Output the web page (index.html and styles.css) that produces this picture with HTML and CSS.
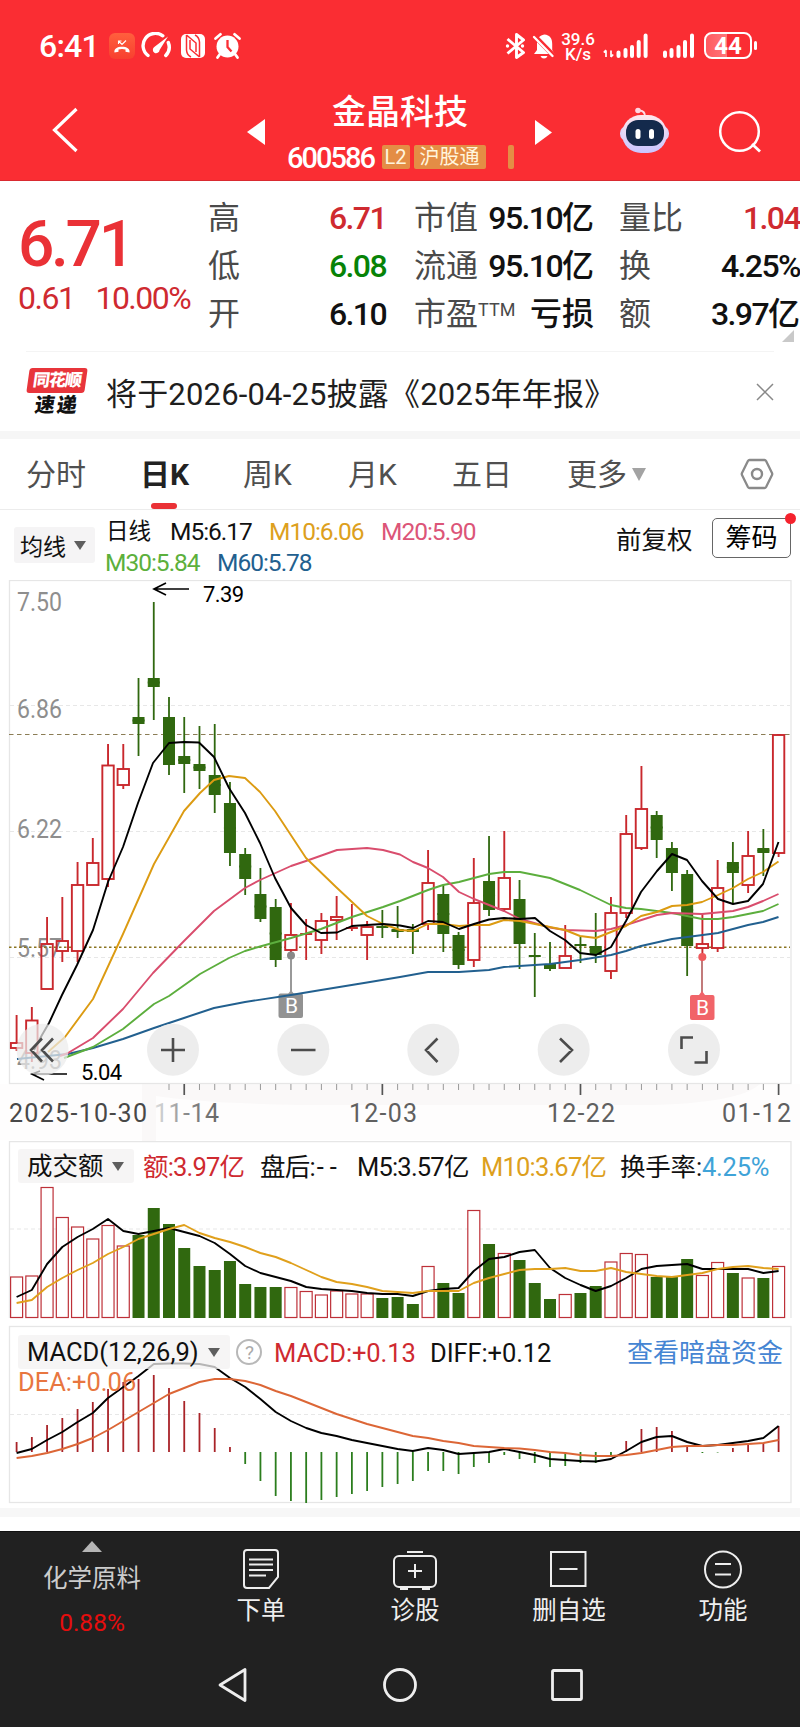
FILE: index.html
```html
<!DOCTYPE html>
<html lang="zh-CN">
<head>
<meta charset="utf-8">
<title>金晶科技 600586</title>
<link rel="stylesheet" href="styles.css">
</head>
<body>
<header class="top">
  <div class="status">
    <span class="clock">6:41</span>
    <svg class="status-left" width="134" height="30" viewBox="108 32 134 30">
      <defs><linearGradient id="call" x1="0" y1="0" x2="0" y2="1"><stop offset="0" stop-color="#ff5f3d"/><stop offset="1" stop-color="#f8402f"/></linearGradient></defs>
      <rect x="109" y="33" width="26" height="26" rx="6" fill="url(#call)"/>
      <path d="M118.500 41l3.500 3.500 4-4M118.500 44v-3h3" fill="none" stroke="#fff" stroke-width="1.100"/>
      <path d="M114.500 52.500c-.8-4 3-5.800 7.500-5.800s8.300 1.800 7.500 5.800l-4-.7v-2.200q-3.500-1.100-7 0v2.200z" fill="#fff"/>
      <path d="M148 55.500a12.300 12.300 0 0 1 14.800-19.700M168.300 42.500a12.300 12.300 0 0 1-2.500 13" fill="none" stroke="#fff" stroke-width="3.400" stroke-linecap="round"/>
      <path d="M168 36.500l-8.400 13.500a3.400 3.400 0 1 1-5-3.200z" fill="#fff"/>
      <rect x="181" y="34" width="24" height="24" rx="5" fill="#fff"/>
      <path d="M186.500 35v15q.4 5 4.500 7M199.500 57v-15q-.4-5-4.500-7M190 40v9l9.500 8M196 52v-9l-9.500-8" fill="none" stroke="#fa2d33" stroke-width="1.500"/>
      <circle cx="227.500" cy="46.500" r="11" fill="#fff"/>
      <path d="M215.500 38.500l5-4.200M239.500 38.500l-5-4.200M220 54l-2.500 3.500M235 54l2.500 3.500" stroke="#fff" stroke-width="2.800" stroke-linecap="round"/>
      <path d="M227.500 40v7l4 4.500" fill="none" stroke="#fa2d33" stroke-width="2.300"/>
    </svg>
    <svg class="status-bt" width="50" height="28" viewBox="505 32 50 28">
      <path d="M507.500 39l16 13.500-7 5V34.500l7 5.500-16 13.500" fill="none" stroke="#fff" stroke-width="2.900" stroke-linejoin="round"/>
      <circle cx="507.500" cy="46" r="1.700" fill="#fff"/><circle cx="522.500" cy="46" r="1.700" fill="#fff"/>
      <path d="M534 54l3-4v-7c0-5 3-7.500 7.200-8.500 6 .5 8 4 8 9.500v6l2.300 4z" fill="#fff"/><path d="M540.500 56h7q-1 2.500-3.500 2.500t-3.500-2.500z" fill="#fff"/>
      <path d="M533 34.500l21 21.500" stroke="#fa2d33" stroke-width="5"/><path d="M534 37l18.500 19" stroke="#fff" stroke-width="2.400" stroke-linecap="round"/>
    </svg>
    <span class="speed"><span>39.6</span><span>K/s</span></span>
    <svg class="status-signal" width="94" height="28" viewBox="602 32 94 28">
      <path d="M606 57v-6.500M603.800 52.500l2.200-2.500M611 50.500v6.500M613.200 54.500l-2.200 2.500" fill="none" stroke="#fff" stroke-width="1.700"/>
      <path d="M618.500 52.500v3.500M625.500 50v6M632 47v9M638.700 42v14M645.600 35.500v20.500M665 52.500v3.500M671.500 50v6M678.500 47v9M685 42v14M692 35.500v20.500" stroke="#fff" stroke-width="4" stroke-linecap="round"/>
    </svg>
    <span class="battery">44</span><i class="battery-tip"></i>
  </div>
  <div class="titlebar">
    <svg class="back" width="30" height="48" viewBox="50 106 30 48"><path d="M76.500 109L54.500 130l22 21" fill="none" stroke="#fff" stroke-width="3.200"/></svg>
    <svg class="prev" width="18" height="26" viewBox="0 0 18 26"><path d="M0 13L18 0v26z" fill="#fff"/></svg>
    <div class="stock">
      <h1>金晶科技</h1>
      <div class="code"><b>600586</b><span class="tag tag-l2">L2</span><span class="tag tag-hk">沪股通</span><span class="tag-bit"></span></div>
    </div>
    <svg class="next" width="17" height="25" viewBox="0 0 17 25"><path d="M17 12.500L0 0v25z" fill="#fff"/></svg>
    <svg class="robot" width="50" height="48" viewBox="620 106 50 48">
      <defs><linearGradient id="shell" x1="0" y1="0" x2="0" y2="1"><stop offset="0" stop-color="#ffe8ee"/><stop offset="1" stop-color="#c9c4ff"/></linearGradient></defs>
      <path d="M640 110.500q6 0 6 6" fill="none" stroke="#ffdbe6" stroke-width="2"/><circle cx="639" cy="110.500" r="2.800" fill="#ffd6e2"/>
      <rect x="621" y="126" width="49" height="15" rx="7" fill="#dcd2f8"/>
      <rect x="623" y="115" width="45" height="38" rx="19" fill="url(#shell)"/>
      <rect x="627" y="120" width="38" height="26" rx="12" fill="#142a4c"/>
      <rect x="636.500" y="129" width="5" height="10" rx="2.500" fill="#fff"/><rect x="650" y="129" width="5" height="10" rx="2.500" fill="#fff"/>
    </svg>
    <svg class="search" width="44" height="44" viewBox="718 110 44 44"><circle cx="739.500" cy="131.500" r="19.300" fill="none" stroke="#fff" stroke-width="2.500"/><path d="M752 144l8 7.500" stroke="#fff" stroke-width="2.800"/></svg>
  </div>
</header>

<section class="quote">
  <div class="last">
    <div class="price">6.71</div>
    <div class="change"><span>0.61</span><span>10.00%</span></div>
  </div>
  <dl class="facts facts-a"><dt>高</dt><dd class="red">6.71</dd><dt>低</dt><dd class="green">6.08</dd><dt>开</dt><dd>6.10</dd></dl>
  <dl class="facts facts-b"><dt>市值</dt><dd>95.10<em>亿</em></dd><dt>流通</dt><dd>95.10<em>亿</em></dd><dt>市盈<sup>TTM</sup></dt><dd><em>亏损</em></dd></dl>
  <dl class="facts facts-c"><dt>量比</dt><dd class="red">1.04</dd><dt>换</dt><dd>4.25%</dd><dt>额</dt><dd>3.97<em>亿</em></dd></dl>
  <i class="corner"></i>
</section>

<section class="news">
  <div class="brand"><span class="brand-top">同花顺</span><span class="brand-bottom">速递</span></div>
  <p>将于2026-04-25披露《2025年年报》</p>
  <svg width="18" height="18" viewBox="0 0 18 18"><path d="M1 1l16 16M17 1L1 17" stroke="#888" stroke-width="1.500"/></svg>
</section>

<nav class="tabs">
  <span class="t1">分时</span><span class="t2 active">日K</span><span class="t3">周K</span><span class="t4">月K</span><span class="t5">五日</span><span class="t6">更多<i></i></span>
  <svg width="34" height="32" viewBox="0 0 34 32"><path d="M9.500 2h15q1 0 1.600 1L32 15q.5 1 0 2l-5.900 12q-.6 1-1.600 1h-15q-1 0-1.600-1L2 17q-.5-1 0-2L7.900 3q.6-1 1.600-1z" fill="none" stroke="#8a8a8a" stroke-width="2.300"/><circle cx="17" cy="16" r="5" fill="none" stroke="#8a8a8a" stroke-width="2.400"/></svg>
</nav>

<section class="legend">
  <span class="chip chip-ma">均线<i></i></span>
  <div class="ma">
    <div class="ma-row"><span class="ma-name">日线</span><span class="ma-5">M5:6.17</span><span class="ma-10">M10:6.06</span><span class="ma-20">M20:5.90</span></div>
    <div class="ma-row"><span class="ma-30">M30:5.84</span><span class="ma-60">M60:5.78</span></div>
  </div>
  <span class="adjust">前复权</span>
  <span class="chips-btn">筹码<i></i></span>
</section>

<svg id="kline" class="chart" width="800" height="561" viewBox="0 580 800 561"></svg>

<section class="panel">
  <svg id="volume" class="chart" width="800" height="180" viewBox="0 1141 800 180"></svg>
  <div class="panel-bar vol-bar"><span class="chip chip-vol">成交额<i></i></span><span class="v1 red">额:3.97亿</span><span class="v2">盘后:<s>--</s></span><span class="v3">M5:3.57亿</span><span class="v4">M10:3.67亿</span><span class="v5">换手率:<b>4.25%</b></span></div>
</section>
<section class="panel">
  <svg id="macd" class="chart" width="800" height="187" viewBox="0 1321 800 187"></svg>
  <div class="panel-bar macd-bar"><span class="chip chip-macd">MACD(12,26,9)<i></i></span><span class="help">?</span><span class="m1 red">MACD:+0.13</span><span class="m2">DIFF:+0.12</span><span class="m3">查看暗盘资金</span></div>
  <div class="dea">DEA:+0.06</div>
</section>
<div class="band"></div>

<footer class="dock">
  <div class="menu">
    <div class="sector"><i></i><span>化学原料</span><b>0.88%</b></div>
    <div class="item"><svg width="44" height="44" viewBox="0 0 44 44"><path d="M8 3h28q3 0 3 3v24l-9 11H8q-3 0-3-3V6q0-3 3-3zM10 12.500h24M10 17.500h24M10 23h24M10 28.500h17"/></svg><span>下单</span></div>
    <div class="item"><svg width="46" height="44" viewBox="0 0 46 44"><rect x="2" y="9" width="42" height="31" rx="5"/><path d="M15 5h16M23 17v14M16 24h14"/><path d="M8 41.500h8M30 41.500h8" stroke-width="3"/></svg><span>诊股</span></div>
    <div class="item"><svg width="44" height="44" viewBox="0 0 44 44"><rect x="4" y="5" width="34.500" height="34"/><path d="M12.500 22h18"/></svg><span>删自选</span></div>
    <div class="item"><svg width="44" height="44" viewBox="0 0 44 44"><circle cx="22" cy="22.500" r="18"/><path d="M14 17h16M14 27.500h16"/></svg><span>功能</span></div>
  </div>
  <div class="system">
    <svg width="34" height="38" viewBox="0 0 34 38"><path d="M4 19L29 3.500v31z" stroke-linejoin="round"/></svg>
    <svg width="38" height="38" viewBox="0 0 38 38"><circle cx="19" cy="19" r="15.500"/></svg>
    <svg width="34" height="34" viewBox="0 0 34 34"><rect x="2.500" y="2.500" width="29" height="29" rx="1"/></svg>
  </div>
</footer>
<script src="app.js"></script>
</body>
</html>
```
FILE: styles.css
```css
* { box-sizing: border-box; }
body { margin: 0; width: 800px; height: 1727px; overflow: hidden; background: #fff; color: #111; font-family: Roboto, "Noto Sans CJK SC", sans-serif; }
svg { display: block; flex: none; }
i, em { font-style: normal; }
span { white-space: nowrap; }
.red { color: #cf2a30; }
.green { color: #078307; }

.top { height: 181px; background: #fa2d33; color: #fff; border-bottom: 1px solid #d92a30; }
.status { display: flex; align-items: flex-start; height: 90px; padding: 32px 0 0 39px; }
.clock { width: 69px; font-size: 32px; line-height: 29px; font-weight: 500; letter-spacing: -0.8px; }
.status-bt { margin-left: 263px; }
.speed { display: flex; flex-direction: column; width: 38px; margin-left: 4px; font-size: 17px; line-height: 15px; font-weight: 500; text-align: center; }
.status-signal { margin-left: 5px; }
.battery { width: 48px; height: 27px; margin-left: 8px; border: 2px solid #fff; border-radius: 8px; background: linear-gradient(90deg, #ff5a60, #ff767a 48%, #fa2d33 48%); font-size: 24px; line-height: 24px; font-weight: 700; text-align: center; }
.battery-tip { width: 3px; height: 9px; margin: 9px 0 0 2px; border-radius: 2px; background: #fff; }
.titlebar { display: flex; align-items: flex-start; height: 90px; padding-left: 50px; }
.back { margin-top: 16px; }
.prev { margin: 29px 0 0 167px; }
.stock { width: 229px; margin-left: 22px; }
h1 { margin: 4px 0 0 45px; font-size: 34px; line-height: 36px; font-weight: 500; }
.code { display: flex; align-items: center; height: 30px; margin-top: 12px; }
.code b { width: 94.500px; padding-top: 1px; font-size: 29px; line-height: 30px; font-weight: 500; letter-spacing: -2px; }
.tag { height: 24px; background: #e48d45; border-radius: 2px; color: #fff5dd; font-size: 20px; line-height: 24px; text-align: center; }
.tag-l2 { width: 28px; }
.tag-hk { width: 72px; margin-left: 4px; }
.tag-bit { width: 6px; height: 24px; margin-left: 22px; background: #e48d45; border-radius: 2px; }
.next { margin: 30px 0 0 19px; }
.robot { margin: 16px 0 0 67px; }
.search { margin: 20px 0 0 49px; }

.quote { position: relative; display: flex; height: 170px; }
.last { width: 208px; padding: 32px 0 0 18px; }
.price { font-size: 64px; line-height: 64px; font-weight: 500; letter-spacing: -3.3px; color: #ea3136; }
.change { display: flex; gap: 21px; margin-top: 3px; font-size: 32px; line-height: 36px; letter-spacing: -1.5px; color: #cf2a30; }
.facts { display: grid; grid-template-columns: 70px 1fr; grid-auto-rows: 48px; height: 144px; margin: 13px 0 0; font-size: 32px; line-height: 48px; }
.facts dt { color: #4a4a4a; white-space: nowrap; }
.facts dd { margin: 0; text-align: right; font-weight: 500; letter-spacing: -1.6px; white-space: nowrap; }
.facts em { letter-spacing: 0; }
.facts-a { width: 178px; }
.facts-b { width: 180px; margin-left: 28px; }
.facts-c { width: 181px; margin-left: 25px; }
sup { font-size: 18px; line-height: 1; vertical-align: 9px; }
.corner { position: absolute; right: 6px; bottom: 9px; border-left: 12px solid transparent; border-bottom: 12px solid #c9c9c9; }

.news { display: flex; align-items: center; height: 88px; padding-top: 2px; border-bottom: 8px solid #f6f6f6; background: linear-gradient(#f4f4f4, #f4f4f4) 26px 0 / 748px 1px no-repeat; }
.brand { display: flex; flex-direction: column; align-items: center; width: 60px; margin: 0 0 0 27px; font-weight: 900; }
.brand-top { width: 58px; height: 25px; border-radius: 3px; background: #e8353b; color: #fff; font-size: 17px; line-height: 24px; text-align: center; transform: skewX(-8deg); letter-spacing: -1px; }
.brand-bottom { font-size: 20px; line-height: 24px; letter-spacing: 2px; transform: skewX(-8deg); }
.news p { width: 642px; margin: 5px 0 0 19px; font-size: 31px; line-height: 42px; letter-spacing: 0.18px; color: #1e1e1e; white-space: nowrap; }
.news svg { margin-left: 8px; }

.tabs { display: flex; align-items: center; height: 71px; border-bottom: 1px solid #ececec; font-size: 30px; color: #505050; }
.tabs span { line-height: 71px; height: 70px; }
.t1 { width: 114px; margin-left: 26px; }
.t2 { width: 103px; }
.active { display: flex; flex-direction: column; font-weight: 700; color: #222; }
.active::after { content: ""; width: 26px; height: 6px; margin: -7px 0 0 11px; border-radius: 3px; background: #ea3136; }
.t3 { width: 105px; }
.t4 { width: 104px; }
.t5 { width: 115px; }
.t6 { display: flex; align-items: center; gap: 5px; width: 173px; }
.t6 i { border: 7.500px solid transparent; border-top: 13px solid #a3a3a3; border-bottom: 0; }

.legend { display: flex; height: 70px; padding-left: 14px; }
.chip { display: flex; align-items: center; background: #f5f4f5; border-radius: 3px; color: #111; }
.chip i { border: 6px solid transparent; border-top: 9px solid #5e5e5e; border-bottom: 0; }
.chip-ma { gap: 8px; width: 81px; height: 36px; margin-top: 17px; padding-left: 6px; font-size: 23px; }
.ma { width: 510px; margin-left: 11px; padding-top: 5px; font-size: 24.500px; letter-spacing: -1px; }
.ma-row { display: flex; height: 31px; line-height: 33px; }
.ma-name { width: 64px; font-size: 22.500px; letter-spacing: 0; }
.ma-5 { width: 99px; }
.ma-10 { width: 112px; color: #dda01d; }
.ma-20 { color: #dc5578; }
.ma-30 { width: 112px; margin-left: -1px; color: #5cb03c; }
.ma-60 { color: #22608f; }
.adjust { width: 96px; font-size: 25.500px; line-height: 60px; }
.chips-btn { position: relative; width: 79px; height: 40px; margin-top: 8px; border: 1px solid #666; border-radius: 5px; font-size: 26px; line-height: 39px; text-align: center; color: #000; }
.chips-btn i { position: absolute; right: -6px; top: -6px; width: 11px; height: 11px; border-radius: 50%; background: #f5222d; }

.panel { position: relative; }
.panel-bar { position: absolute; left: 18px; right: 9px; top: 8px; display: flex; height: 34px; font-size: 25.500px; line-height: 37px; letter-spacing: -0.8px; }
.macd-bar { top: 14px; }
.panel-bar .chip { letter-spacing: 0; background: rgba(243, 241, 242, .75); }
.chip-vol { gap: 8px; width: 116px; padding-left: 9px; font-size: 25.500px; }
.v1 { width: 117px; margin-left: 9px; }
.v2 { width: 97px; }
.v2 s { text-decoration: none; letter-spacing: 6px; margin-left: 2px; }
.v3 { width: 124px; }
.v4 { width: 139px; color: #dda01d; }
.v5 { letter-spacing: -0.2px; }
.v5 b { font-weight: 400; color: #3fa3d8; }
.chip-macd { gap: 9px; width: 212px; padding-left: 9px; font-size: 25.500px; }
.help { width: 26px; height: 26px; margin: 4px 0 0 6px; border: 2px solid #b8b8b8; border-radius: 50%; color: #aaa; font-size: 19px; line-height: 23px; text-align: center; }
.m1 { width: 156px; margin-left: 12px; letter-spacing: -0.1px; }
.m2 { width: 197px; letter-spacing: -0.1px; }
.m3 { color: #4585d3; font-size: 26px; letter-spacing: 0; }
.dea { position: absolute; left: 18px; top: 44px; font-size: 25.500px; line-height: 34px; color: #e87640; }
.band { height: 9px; background: #f7f7f7; }

.dock { height: 196px; margin-top: 14px; background: #212121; border-top: 1px solid #111; color: #eee; }
.menu { display: grid; grid-template-columns: 184px repeat(4, 154px); height: 116px; }
.sector, .item { display: flex; flex-direction: column; align-items: center; font-size: 24.500px; }
.sector { padding-top: 9px; }
.sector i { border: 10px solid transparent; border-bottom: 11px solid #b5b5b5; border-top: 0; }
.sector span { margin-top: 10px; line-height: 34px; color: #ccc; }
.sector b { margin-top: 10px; font-weight: 400; line-height: 34px; color: #e60d0d; }
.item { padding-top: 15px; }
.item span { margin-top: 3px; line-height: 34px; }
.item svg { fill: none; stroke: #eee; stroke-width: 2; }
.system { display: flex; align-items: center; height: 74px; padding-left: 216px; }
.system svg { fill: none; stroke: #eee; stroke-width: 2.800; }
.system svg:nth-child(2) { margin-left: 130.500px; }
.system svg:nth-child(3) { margin-left: 131px; }

.chart text { font-family: Roboto, "Noto Sans CJK SC", sans-serif; }
.frame { fill: none; stroke: #e6e6e6; stroke-width: 1.300; }
.grid { stroke: #e7e7e7; stroke-width: 1.200; stroke-dasharray: 4 3; }
.up { fill: #fff; stroke: #c9282d; stroke-width: 1.900; }
.up-thin { fill: #fff; stroke: #bd3038; stroke-width: 1.200; }
.down { fill: #30680f; }
.line { fill: none; stroke-width: 1.900; stroke-linejoin: round; }
.axis { font-size: 25px; fill: #8e8e8e; }
.date { font-size: 25px; fill: #606060; }
.mark { font-size: 22px; fill: #000; }
.btn { fill: #ececec; }
.glyph { fill: none; stroke: #4c4c4c; stroke-width: 2.600; }
```
FILE: app.js
```js
const X0 = 16.6, STEP = 15.24;
const x = i => X0 + STEP * i;
const poly = (pts, color) => `<polyline class="line" stroke="${color}" points="${pts}"/>`;
const series = (ys, color) => poly(ys.map((y, i) => `${x(i).toFixed(1)},${y}`).join(' '), color);
const text = (cls, s, left, base, width, extra = '') => `<text class="${cls}" x="${left}" y="${base}" textLength="${width}" ${extra}>${s}</text>`;
const hline = (y, cls = 'grid') => `<path class="${cls}" d="M10 ${y}H790"/>`;

// direction, high, body top, body bottom, low
const candles = [
['r',1015,1043,1048,1051],['r',1007,1020.5,1053,1062],['r',917,944,989,989],['r',897,941,951,962],['r',862,885,951,962],['r',838,863,885,885],['r',744,765.5,879,887],['r',744,769,785,789],
['g',678,717,724,756],['g',602,678,687,720],['g',697,717,765,775],['g',717,756,764,793],['g',726,764,771,789],['g',724,775,795,813],['g',782,803,853,866],['g',848,854,879,895],['g',868,894,919,922],['g',899,907,960,967],
['r',903,935,950,955],['r',919,934,934,960],['r',913,921,940,954],['r',896,917,920,940],['r',904,928,928,931],['r',921,927,935,960],['g',910,927,927,938],['g',906,929,932,938],['g',924,929,932,954],
['r',850,883,924,930],['g',885,894,934,952],['g',932,935,965,969],['r',858,903,960,967],['g',836,881,910,916],['r',831,878,909,911],['g',880,899,944,969],['g',933,956,956,997],['g',942,964,969,971],['r',925,956,968,968],
['g',937,945,945,963],['g',913,946,955,963],['r',897,913,971,979],['r',815,834,913,918],['r',766,809,848,850],['g',811,815,840,858],['g',842,848,873,891],['g',870,874,946,976],['r',913,944,948,957],['r',860,888,948,952],
['g',842,862,873,904],['r',831,856,885,893],['g',829,848,853,876],['r',735,735,853,857]];

const ma60 = '17,1059 68,1054 93,1048 123,1039 154,1028 184,1018 214,1008 245,1002 291,995 321,990 367,982.5 400,977 428,972 459,972 489,970 504,967 550,964 580,960 611,955 626,951 641,946 672,939 718,933 748,925 763,922 778.5,917';
const ma30 = '64,1058 93,1047 123,1029 154,1004 169,996 200,974 229,958 245,951 260,946.5 291,938 321,929 352,917 383,907 400,901 428,890 443,885 459,882 489,874 504,872 520,872 550,878 580,890 611,905 626,908 641,909 672,913 702,919 718,919 733,917 763,911 778.5,904';
const ma20 = '60,1056 68,1053 93,1038 123,1009 153,973 184,941 214,911 245,888 260,880 291,866 306,861 337,850 367,848 383,850 400,854.5 413,862 428,868 443,877 459,892 474,899 504,911 520,919 550,927.5 565,930 596,931 611,929 626,925 657,915 672,913 702,914 733,911 748,907 763,901 778.5,894';
const ma10 = '48,1052 65,1037 93,999 123,934 154,864 184,811 200,793 214,780 229,776 245,778 260,792 275,811 306,858 336,887 367,916 383,924 400,930 413,931 428,924 443,924 459,926 474,925 489,925 504,920 520,921 535,924 550,927 565,930 580,936 596,938 611,932 626,926 641,916 657,912 672,906 687,905 702,902 718,895 733,888 748,879 763,872 778.5,861.5';
const ma5 = '34,1050 42,1035 49,1023 62,995 77,965 93,930 108,882 123,847 138,803 153,763 169,743 184,742 199,742.5 214,757 229,788 245,813 260,843 275,878 291,908 306,925 321,933 337,932.5 352,926 367,925 383,924 400,925.5 413,928 428,921 443,922 459,929 474,924 489,919.5 504,918 520,919 535,918 550,931 565,940 580,953 596,955 611,947 626,921 641,892 657,871 672,854 687,860 702,881 718,899 733,904 748,901 763,884 778.5,842';

let k = `<path d="M0 1084H800V1140H0z" fill="#fefdfd"/><path d="M142 1084H760Q740 1103 650 1105H300Q200 1103 156 1096V1141H142z" fill="#faf8f8"/>`;
k += `<rect class="frame" x="9.5" y="580.5" width="781.500" height="503"/>` + hline(705.5) + hline(831.5) + hline(957.5);
k += [['7.50', 611], ['6.86', 718], ['6.22', 838], ['5.57', 957], ['4.93', 1069]].map(([s, y]) => text('axis', s, 17, y, 45, 'lengthAdjust="spacingAndGlyphs"')).join('');
k += `<path d="M9 734.5H790" stroke="#8b7d55" stroke-width="1.200" stroke-dasharray="4.500 3.500"/><path d="M9 947.3H790" stroke="#8a7420" stroke-width="1.500" stroke-dasharray="2.500 2.500"/>`;
candles.forEach(([d, hi, t, b, lo], i) => {
  const c = x(i), col = d === 'r' ? '#c9282d' : '#30680f';
  if (d === 'g' || b - t < 1) k += `<path d="M${c} ${hi}V${lo}M${c - 6} ${(t + b) / 2}h12" stroke="${col}" stroke-width="1.800"/>`;
  else k += `<path d="M${c} ${hi}V${t}M${c} ${b}V${lo}" stroke="${col}" stroke-width="1.900"/>`;
  if (b - t >= 1) k += d === 'r' ? `<rect class="up" style="fill-opacity:${i < 4 ? 0 : 1}" x="${c - 5.7}" y="${t}" width="11.400" height="${b - t}"/>` : `<rect class="down" x="${c - 6}" y="${t}" width="12" height="${b - t}"/>`;
});
k += `<path d="M291 956V993" stroke="#555" stroke-width="1.200"/><circle cx="291" cy="955.5" r="4" fill="#888"/><path d="M288 994l3-4 3 4z" fill="#999"/><rect x="278.500" y="993.500" width="24.500" height="24.500" rx="2" fill="#929292"/>` +
  `<path d="M702 957V995" stroke="#922" stroke-width="1.200"/><circle cx="702.300" cy="957" r="4" fill="#f0595d"/><path d="M699 995l3-4 3 4z" fill="#f0626a"/><rect x="690" y="995" width="24.500" height="25" rx="2" fill="#f16469"/>`;
k += poly(ma60, '#22608f') + poly(ma30, '#5cae3d') + poly(ma20, '#d94d6d') + poly(ma10, '#dc9b12') + poly(ma5, '#000');
k += `<text x="291.500" y="1013" font-size="21" text-anchor="middle" fill="#fff">B</text><text x="702.500" y="1015" font-size="21" text-anchor="middle" fill="#fff">B</text>`;
k += `<path d="M189 589H154M166 583l-12 6 12 6M67 1074H32M44 1080l-12-6 8-3" fill="none" stroke="#000" stroke-width="1.700"/>` + text('mark','7.39',203,602,41) + text('mark','5.04',81,1080,41);
[42.5, 173, 303.3, 433.3, 563.7, 694].forEach((c, i) => { k += `<circle class="btn" style="fill-opacity:${i ? .92 : .72}" cx="${c}" cy="1049.700" r="26"/>`; });
k += `<path class="glyph" d="M42 1038.500L31 1050l11 11.500M53 1038.500L42 1050l11 11.500M161 1050h24M173 1038v24M291 1050h24.500M437.500 1038.500L426 1050l11.500 12M560 1038.500l12 11.500-12 12M681.500 1049v-11.500H693M694.500 1062.500h12V1051"/>`;
for (let i = 10; i <= 50; i++) { const major = (i - 11) % 13 === 0; k += `<path d="M${x(i)} 1084v${major ? 11 : 6}" stroke="${major ? '#555' : '#999'}" stroke-width="${major ? 1.7 : 1}"/>`; }
k += `<defs><linearGradient id="fade"><stop offset="0" stop-color="#e0e0e0"/><stop offset=".5" stop-color="#8a8a8a"/><stop offset="1" stop-color="#666"/></linearGradient></defs>`;
k += text('date','2025-10-30',9,1122,138,'style="fill:#484848"') + text('date','11-14',154,1122,65,'style="fill:url(#fade)"') + text('date','12-03',349,1122,68) + text('date','12-22',547,1122,68) + text('date','01-12',722,1122,69);
document.getElementById('kline').innerHTML = k;

const turnover = [1277,1276,1187.5,1217.5,1227,1239,1225.5,1246,1235,1208,1224,1248,1266,1270,1261,1284,1287,1287,1287.5,1291.5,1295,1291,1294,1294,1298,1297,1304,1266.5,1283,1293,1210.5,1244,1253.5,1260,1283,1299,1294.5,1293,1286,1262,1253.5,1254.5,1277,1277,1259,1275.5,1262.5,1273,1278,1278,1266.5];
const v5 = [1297,1290,1264,1247,1237,1229,1219,1231,1234,1231,1228,1232,1236,1243,1254,1266,1273,1277,1281,1287,1289,1290,1291,1293,1294,1294,1296,1291,1289,1288,1271,1259,1257,1252,1250,1268,1278,1285,1291,1286,1278,1269,1266,1265,1264,1269,1269,1269,1269,1273,1271];
const v10 = [1303,1300,1287,1278,1270,1263,1254,1247,1239,1234,1229,1225,1233,1238,1242,1247,1253,1257,1263,1270,1277,1282,1284,1287,1291,1292,1293,1291,1291,1291,1283,1278,1274,1270,1269,1269,1268,1271,1271,1268,1272,1274,1276,1277,1275,1273,1269,1267,1266,1268,1269];
let v = `<path class="frame" d="M9.500 1318V1141.500H791V1318"/>` + hline(1229);
turnover.forEach((t, i) => { v += candles[i][0] === 'r' ? `<rect class="up-thin" x="${x(i) - 6}" y="${t}" width="12" height="${1317.5 - t}"/>` : `<rect class="down" x="${x(i) - 6}" y="${t}" width="12" height="${1318 - t}"/>`; });
v += series(v5, '#000') + series(v10, '#e0a01c');
document.getElementById('volume').innerHTML = v;

const bars = [1442,1437,1425,1418,1409,1402,1389,1382,1379,1375,1388,1401,1413,1428,1447,1464,1481,1496,1501,1503,1500,1497,1494,1491,1487,1484,1481,1471,1471,1474,1467,1463,1455,1459,1463,1467,1466,1463,1463,1456,1441,1429,1427,1431,1447,1453,1452.5,1448,1445,1443,1426];
const diff = [1453,1449,1440,1432,1422,1413,1398,1387,1376,1364,1363.5,1363.5,1364,1367,1378,1387,1399,1412,1421,1428,1433,1436,1440,1443,1446,1449,1451,1448,1450,1454,1453,1452,1449,1452,1455,1459,1460,1461,1461.5,1459,1451,1442,1437,1436,1442,1446,1445,1443,1441,1438,1426];
const dea = [1458,1456,1453,1449,1444,1438,1430,1421,1412,1403,1394,1388,1382,1379,1379,1381,1385,1391,1396,1402,1408,1414,1419,1424,1428,1432,1436,1438,1441,1443,1446,1447,1448,1448.5,1450,1452,1453,1455,1456,1456,1455,1453,1450,1447,1446,1446,1445,1445,1444,1443,1440];
let m = `<rect class="frame" x="9.500" y="1326.500" width="781.500" height="176"/>` + hline(1414.5);
bars.forEach((t, i) => { m += `<path d="M${x(i)} 1452V${t}" stroke="${t < 1452 ? '#a92328' : '#2b7d1d'}" stroke-width="1.800"/>`; });
m += series(diff, '#000') + series(dea, '#dc6636');
document.getElementById('macd').innerHTML = m;
```
